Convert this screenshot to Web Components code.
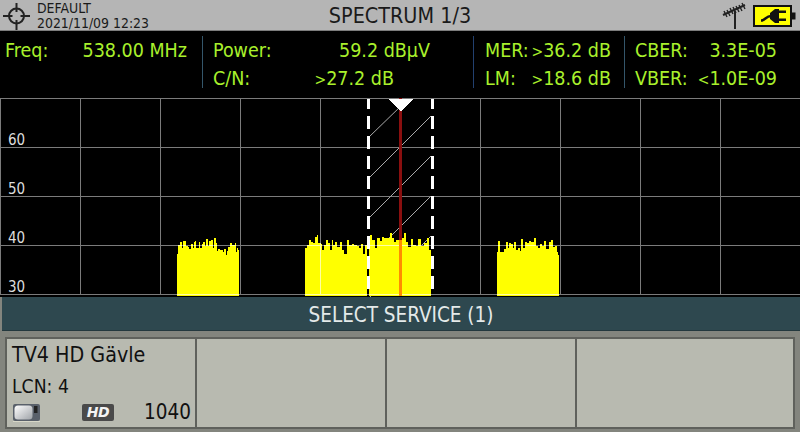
<!DOCTYPE html>
<html>
<head>
<meta charset="utf-8">
<style>
  html, body { margin: 0; padding: 0; background: #000; }
  body { width: 800px; height: 432px; overflow: hidden; font-family: "DejaVu Sans Condensed", "DejaVu Sans", sans-serif; font-stretch: condensed; }
</style>
</head>
<body>
<status-bar title="SPECTRUM 1/3" profile="DEFAULT" date="2021/11/09 12:23"></status-bar>
<measure-bar>
  <meas-group left="5" right="15" line="#34566a">
    <meas-row label="Freq:" value="538.00 MHz"></meas-row>
  </meas-group>
  <meas-group left="10" right="43" line="#22406f" width="271">
    <meas-row label="Power:" value="59.2 dBµV"></meas-row>
    <meas-row label="C/N:" value="&gt;27.2 dB" extra="36"></meas-row>
  </meas-group>
  <meas-group left="11" right="13" line="#34566a" width="151">
    <meas-row label="MER:" value="&gt;36.2 dB"></meas-row>
    <meas-row label="LM:" value="&gt;18.6 dB"></meas-row>
  </meas-group>
  <meas-group left="10" right="22" width="175">
    <meas-row label="CBER:" value="3.3E-05"></meas-row>
    <meas-row label="VBER:" value="&lt;1.0E-09"></meas-row>
  </meas-group>
</measure-bar>
<spectrum-view></spectrum-view>
<service-panel title="SELECT SERVICE (1)">
  <service-cell name="TV4 HD Gävle" lcn="LCN: 4" sid="1040"></service-cell>
  <service-cell></service-cell>
  <service-cell></service-cell>
  <service-cell></service-cell>
</service-panel>

<script>
class StatusBar extends HTMLElement {
  constructor() {
    super();
    this.attachShadow({ mode: 'open' });
  }
  connectedCallback() {
    this.shadowRoot.innerHTML = `
      <style>
        :host { display: grid; grid-template-columns: 1fr auto 1fr; align-items: center; height: 30px;
          background: #b5b5b5; border-bottom: 1px solid #7c7c7c; color: #1a1a1a; }
        .left { display: flex; align-items: center; gap: 7px; padding-left: 3px; }
        .info { font-size: 13.9px; line-height: 15px; padding-top: 1px; }
        .title { font-size: 21.4px; }
        .right { display: flex; justify-content: flex-end; align-items: center; gap: 6px; padding-right: 4px; }
        svg { display: block; }
      </style>
      <div class="left">
        <svg width="27" height="30" viewBox="0 0 27 30" fill="none" stroke="#222" stroke-width="2">
          <circle cx="13.500" cy="15" r="7.500"/>
          <path d="M13.500 2v9M13.500 19v10M0 15h9.500M17.500 15h9.500"/>
        </svg>
        <div class="info"><div>${this.getAttribute('profile')}</div><div>${this.getAttribute('date')}</div></div>
      </div>
      <div class="title">${this.getAttribute('title')}</div>
      <div class="right">
        <svg width="26" height="28" viewBox="0 0 26 28" fill="none" stroke="#222">
          <path d="M2 13L24 3" stroke-width="2"/>
          <path d="M3 9l3 6M6 8l3 6M9 6l3 6M12 5l3 6M15 4l3 6M18 3l3 6M21 1l3 6" stroke-width="1.4"/>
          <path d="M14 9v18" stroke-width="2"/>
        </svg>
        <svg width="43" height="22" viewBox="0 0 43 22">
          <rect x="1" y="1" width="37" height="20" fill="#ff0" stroke="#111" stroke-width="2"/>
          <rect x="39" y="7.500" width="3.500" height="7" fill="#111"/>
          <path d="M8 15.500c4 0 5-4.500 10-4.500" fill="none" stroke="#111" stroke-width="2.500"/>
          <path d="M17 8L22 4H26V18H22L17 14Z" fill="#111"/>
          <path d="M26 5.500h7v2.500h-7zM26 13.500h7v2.500h-7z" fill="#111"/>
        </svg>
      </div>`;
  }
}

class MeasureBar extends HTMLElement {
  constructor() {
    super();
    this.attachShadow({ mode: 'open' });
    this.shadowRoot.innerHTML = `
      <style>
        :host { display: flex; align-items: flex-start; height: 67px; background: #000; box-sizing: border-box; padding-top: 5px; }
      </style>
      <slot></slot>`;
  }
}

class MeasGroup extends HTMLElement {
  constructor() {
    super();
    this.attachShadow({ mode: 'open' });
  }
  connectedCallback() {
    const left = this.getAttribute('left') || 0;
    const right = this.getAttribute('right') || 0;
    const width = this.getAttribute('width') || 203;
    const line = this.getAttribute('line') || 'transparent';
    this.shadowRoot.innerHTML = `
      <style>
        :host { display: block; box-sizing: border-box; width: ${width}px; height: 52px; padding: 1px ${right}px 0 ${left}px;
          border-right: 1px solid ${line}; color: #a9f02c; font-size: 19.5px; flex: none; }
      </style>
      <slot></slot>`;
  }
}

class MeasRow extends HTMLElement {
  constructor() {
    super();
    this.attachShadow({ mode: 'open' });
  }
  connectedCallback() {
    const extra = this.getAttribute('extra') || 0;
    // el signo < o > va mas estrecho en el equipo
    const value = this.getAttribute('value').replace(/^([<>])/, (m, s) => `<b>${s === '<' ? '&lt;' : '&gt;'}</b>`);
    this.shadowRoot.innerHTML = `
      <style>
        :host { display: flex; justify-content: space-between; height: 28px; line-height: 28px; white-space: nowrap; padding-right: ${extra}px; }
        b { font-weight: normal; font-size: 15.5px; }
      </style>
      <span>${this.getAttribute('label')}</span><span>${value}</span>`;
  }
}

// picos leidos del zoom: "x:y", a escala 3x desde (bloque, 225)
const BLOCKS = [
  [177, 239, '0:87 3:60 9:52 15:70 18:48 24:48 27:62 33:65 36:72 42:58 48:68 51:50 54:48 57:68 66:52 69:68 75:58 78:50 84:62 87:42 93:62 96:47 102:45 108:68 111:40 117:55 120:78 123:72 129:74 135:74 138:82 141:72 147:90 150:78 154:65 159:55 165:60 174:55 177:82 180:68 183:75'],
  [305, 367, '0:68 7:60 12:45 18:52 25:55 30:35 35:30 40:55 47:58 52:75 57:60 62:45 68:55 75:75 80:45 85:60 90:50 95:65 105:50 112:75 118:88 125:45 133:60 140:58 147:60 155:62 162:70 168:58 175:88 180:60 185:85'],
  [369, 431, '0:60 3:30 10:45 18:68 25:40 32:48 38:35 45:40 55:38 62:25 70:38 76:50 82:45 90:25 100:40 106:25 112:50 118:65 125:42 132:60 140:62 148:42 155:62 165:55 175:40 180:75 185:60'],
  [497, 559, '0:80 3:48 9:80 15:82 21:72 27:52 33:68 36:55 42:58 48:70 51:52 57:75 63:70 69:78 72:42 78:68 84:52 90:55 96:48 102:52 111:40 117:62 123:68 129:58 135:62 141:48 147:72 156:52 162:45 168:65 174:62 180:82 183:90']
];

class SpectrumView extends HTMLElement {
  constructor() {
    super();
    this.attachShadow({ mode: 'open' });
  }
  blockPath([x0, x1, peaks]) {
    let d = `M${x0} 296`;
    const pts = peaks.split(' ').map(p => p.split(':').map(Number));
    pts.forEach(([zx, zy], i) => {
      const x = x0 + Math.round(zx / 3);
      const y = 225 + Math.round(zy / 3);
      d += `L${x} ${y}`;
      const next = pts[i + 1] ? x0 + Math.round(pts[i + 1][0] / 3) : x1;
      d += `L${next} ${y}`;
    });
    return d + `L${x1} 296Z`;
  }
  connectedCallback() {
    let vert = '';
    for (let x = 0; x < 800; x += 80) vert += `M${x + .5} 98V295`;
    let horiz = '';
    for (let y = 98; y < 295; y += 49) horiz += `M0 ${y + .5}H800`;
    const labels = [[60, 145], [50, 194], [40, 243], [30, 292]];
    this.shadowRoot.innerHTML = `
      <style>
        :host { display: block; height: 199px; background: #000; }
        svg { display: block; }
        text { font-size: 15px; fill: #ddd; }
      </style>
      <svg width="800" height="199" viewBox="0 98 800 199" shape-rendering="crispEdges">
        <path d="${vert}${horiz}" stroke="#7b7b7b" fill="none"/>
        <g shape-rendering="auto" stroke="#aaa" stroke-width="1" fill="none">
          <path d="M369 137L402 105M369 178L431 116M369 218L431 156M369 258L431 196M369 298L431 236"/>
        </g>
        <path d="${BLOCKS.map(b => this.blockPath(b)).join('')}" fill="#ff0"/>
        <path d="M320.500 236V295M0 294.500H800M160 245.500H800" stroke="#ffffa0" fill="none" clip-path="url(#sp)"/>
        <clipPath id="sp"><path d="${BLOCKS.map(b => this.blockPath(b)).join('')}"/></clipPath>
        <rect x="399" y="98" width="3" height="198" fill="#8a0f0f"/>
        <rect x="399" y="240" width="3" height="56" fill="#ff8c00"/>
        <path d="M388 99H414L401 111Z" fill="#fff"/>
        <path d="M368.500 99V296M432.500 99V296" stroke="#fff" stroke-width="3" stroke-dasharray="13 7" stroke-dashoffset="3" fill="none"/>
        ${labels.map(([t, y]) => `<text x="8" y="${y}">${t}</text>`).join('')}
      </svg>`;
  }
}

class ServicePanel extends HTMLElement {
  constructor() {
    super();
    this.attachShadow({ mode: 'open' });
  }
  connectedCallback() {
    this.shadowRoot.innerHTML = `
      <style>
        :host { display: block; height: 135px; background: #83857e; box-sizing: border-box; }
        .head { height: 33px; line-height: 37px; margin-left: 2px; text-align: center; background: #2e484f;
          color: #e4eaea; font-size: 20.5px; border-bottom: 1px solid #23383e; }
        .cells { display: grid; grid-template-columns: 188px 188px 188px 216px; gap: 2px; margin: 6px 5px 0 5px;
          height: 92px; box-sizing: border-box; padding: 2px; background: #5f615c; }
      </style>
      <div class="head">${this.getAttribute('title')}</div>
      <div class="cells"><slot></slot></div>`;
  }
}

class ServiceCell extends HTMLElement {
  constructor() {
    super();
    this.attachShadow({ mode: 'open' });
  }
  connectedCallback() {
    const name = this.getAttribute('name');
    if (!name) {
      this.shadowRoot.innerHTML = `<style>:host { display: block; background: #b8bab0; }</style>`;
      return;
    }
    this.shadowRoot.innerHTML = `
      <style>
        :host { display: flex; flex-direction: column; background: #b8bab0; color: #111; box-sizing: border-box; padding: 3px 4px 0 5px; }
        .name { font-size: 21.3px; line-height: 26px; }
        .lcn { font-size: 19.2px; line-height: 22px; margin-top: 8px; }
        .foot { display: flex; align-items: center; height: 22px; margin-top: 3px; }
        .num { font-size: 20.5px; margin-left: auto; }
        .hd { margin-left: 42px; width: 32px; height: 17px; border-radius: 2px; background: #4a4a4a; color: #f4f4f4; display: flex;
          align-items: center; justify-content: center; font: italic bold 14px "DejaVu Sans", sans-serif; letter-spacing: -.5px; }
        svg { display: block; flex: none; }
      </style>
      <div class="name">${name}</div>
      <div class="lcn">${this.getAttribute('lcn')}</div>
      <div class="foot">
        <svg width="28" height="19" viewBox="0 0 28 19">
          <defs><linearGradient id="scr" x1="0" y1="0" x2="1" y2="1"><stop offset="0" stop-color="#fff"/><stop offset="1" stop-color="#9fa3a8"/></linearGradient></defs>
          <rect x="1" y="1" width="27" height="17" rx="2" fill="#59606a"/>
          <rect x="2.500" y="2.500" width="18" height="14" rx="3.500" fill="url(#scr)"/>
          <rect x="22" y="3" width="3.500" height="7" fill="#222"/>
          <path d="M1 18.500H28" stroke="#d8d8c8"/>
        </svg>
        <div class="hd">HD</div>
        <div class="num">${this.getAttribute('sid')}</div>
      </div>`;
  }
}

customElements.define('status-bar', StatusBar);
customElements.define('measure-bar', MeasureBar);
customElements.define('meas-group', MeasGroup);
customElements.define('meas-row', MeasRow);
customElements.define('spectrum-view', SpectrumView);
customElements.define('service-panel', ServicePanel);
customElements.define('service-cell', ServiceCell);
</script>
</body>
</html>
